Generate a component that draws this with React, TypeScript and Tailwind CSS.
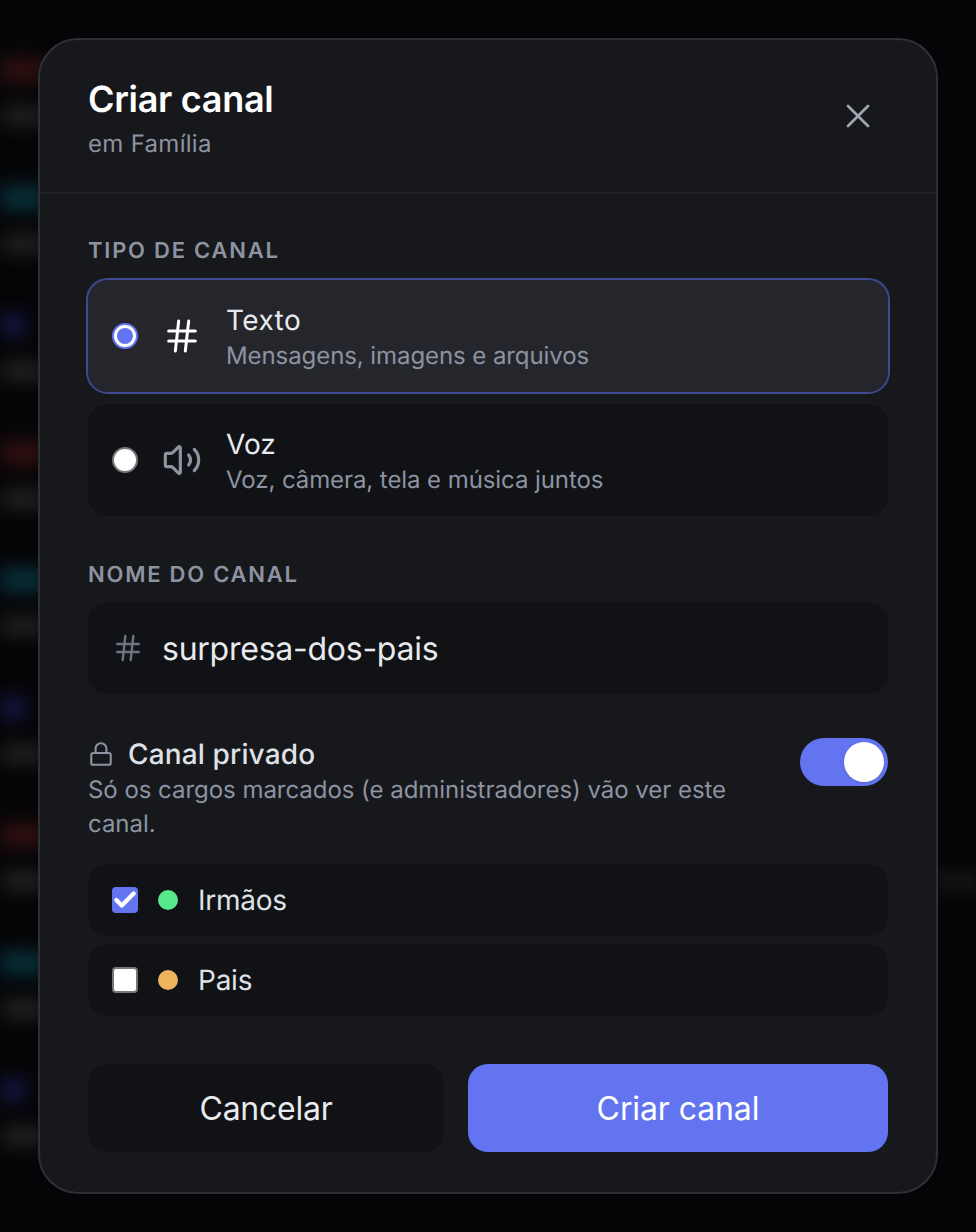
import React from 'react';
import { Check, Hash, Lock, Volume2, X } from 'lucide-react';

const INTER = "font-['Inter','Noto_Sans',sans-serif]";

// blurred chat rows behind the dialog
const BACK_ROWS = [
  { bar: 'bg-[#301010]', width: 'w-[46px]' },
  { bar: 'bg-[#08303a]', width: 'w-[46px]' },
  { bar: 'bg-[#141440]', width: 'w-[26px]' },
];

function Backdrop() {
  const rows = Array.from({ length: 9 }, (_, i) => BACK_ROWS[i % 3]);
  return (
    <div className="absolute inset-0 flex flex-col pt-[58px] blur-[9px]">
      {rows.map((row, i) => (
        <div key={i} className="h-[127.5px] flex flex-col gap-[24px] shrink-0">
          <div className={`h-[24px] ${row.width} ${row.bar}`} />
          <div className="flex justify-between h-[20px]">
            <div className="h-[20px] w-[46px] rounded-full bg-[#222224]" />
            {i === 6 && (
              <div className="flex gap-[8px]">
                <div className="h-[20px] w-[14px] rounded-full bg-[#222224]" />
                <div className="h-[20px] w-[14px] rounded-full bg-[#222224]" />
              </div>
            )}
          </div>
        </div>
      ))}
    </div>
  );
}

function SectionLabel({ children }: { children: React.ReactNode }) {
  return <div className="text-[22px] leading-[28px] font-semibold tracking-[1.76px] text-[#8d93a1]">{children}</div>;
}

function ChannelOption({ selected, icon, title, hint, titleClass }: { selected?: boolean; icon: React.ReactNode; title: string; hint: string; titleClass: string }) {
  return (
    <div
      className={`flex items-center h-[112px] rounded-[20px] pl-[24px] ${
        selected ? 'bg-[#25262c] outline-2 outline-[#3f4a8f]' : 'bg-[#101215]'
      }`}
    >
      {selected ? (
        <span className="w-[26px] h-[26px] rounded-full border-2 border-[#6274f0] bg-white flex items-center justify-center">
          <span className="w-[16px] h-[16px] rounded-full bg-[#6274f0]" />
        </span>
      ) : (
        <span className="w-[26px] h-[26px] rounded-full border-2 border-[#767676] bg-white" />
      )}
      <div className="w-[40px] ml-[24px] flex justify-center">{icon}</div>
      <div className="ml-[24px] pt-[4px] flex flex-col">
        <span className={`text-[28px] leading-[36px] text-[#e9eaee] ${titleClass}`}>{title}</span>
        <span className="text-[24px] leading-[36px] tracking-[-0.08px] text-[#8d93a1]">{hint}</span>
      </div>
    </div>
  );
}

function RoleRow({ checked, color, name }: { checked?: boolean; color: string; name: string }) {
  return (
    <div className="flex items-center h-[72px] rounded-[20px] bg-[#101215] pl-[24px]">
      {checked ? (
        <span className="w-[26px] h-[26px] rounded-[4px] bg-[#6274f0] flex items-center justify-center">
          <Check size={26} strokeWidth={4} className="text-white" />
        </span>
      ) : (
        <span className="w-[26px] h-[26px] rounded-[4px] border-2 border-[#767676] bg-white" />
      )}
      <span className={`ml-[20px] w-[20px] h-[20px] rounded-full ${color}`} />
      <span className="ml-[20px] text-[28px] leading-[36px] tracking-[-0.25px] text-[#dfe1e6]">{name}</span>
    </div>
  );
}

export default function App() {
  return (
    <div className={`relative w-[976px] h-[1232px] overflow-hidden bg-[#050507] [text-rendering:geometricPrecision] ${INTER}`}>
      <Backdrop />
      <div className="absolute inset-0 flex items-center justify-center">
        <div className="w-[900px] h-[1156px] rounded-[40px] border-2 border-[#2e3036] bg-[#16181c] flex flex-col">
          <div className="h-[154px] shrink-0 border-b-2 border-[#222429] px-[48px] flex justify-between">
            <div className="pt-[36px]">
              <h2 className="text-[36px] leading-[46px] font-semibold tracking-[-0.3px] text-white">Criar canal</h2>
              <p className="mt-[5px] text-[24px] leading-[34px] tracking-[0.3px] text-[#8d93a1]">em Família</p>
            </div>
            <button type="button" className="mt-[56px] mr-[10px] h-[40px] w-[40px] flex items-center justify-center text-[#a3a6b0]">
              <X size={40} strokeWidth={1.6} />
            </button>
          </div>

          <div className="flex flex-col px-[48px] pt-[43px]">
            <SectionLabel>TIPO DE CANAL</SectionLabel>
            <div className="mt-[15px] flex flex-col gap-[12px]">
              <ChannelOption selected titleClass="tracking-[0.4px]" icon={<Hash size={40} strokeWidth={1.8} className="text-white" />} title="Texto" hint="Mensagens, imagens e arquivos" />
              <ChannelOption titleClass="" icon={<Volume2 size={40} strokeWidth={1.9} className="text-[#8d93a1]" />} title="Voz" hint="Voz, câmera, tela e música juntos" />
            </div>

            <div className="mt-[45px]">
              <SectionLabel>NOME DO CANAL</SectionLabel>
            </div>
            <div className="mt-[13px] h-[92px] rounded-[20px] bg-[#101215] flex items-center pl-[24px]">
              <Hash size={32} strokeWidth={1.8} className="text-[#6f7480]" />
              <span className="ml-[18px] pt-[2px] text-[32px] leading-[40px] tracking-[-0.25px] text-[#e9eaee]">surpresa-dos-pais</span>
            </div>

            <div className="mt-[42px] flex justify-between">
              <div className="w-[660px]">
                <div className="flex items-center">
                  <Lock size={26} strokeWidth={1.9} className="text-[#8d93a1]" />
                  <span className="ml-[14px] text-[28px] leading-[36px] font-medium tracking-[0.15px] text-[#dfe1e6]">Canal privado</span>
                </div>
                <p className="mt-[1px] text-[24px] leading-[34px] tracking-[-0.04px] text-[#8d93a1]">Só os cargos marcados (e administradores) vão ver este canal.</p>
              </div>
              <div className="mt-[2px] w-[88px] h-[48px] rounded-full bg-[#6274f0] flex items-center justify-end pr-[4px]">
                <div className="w-[40px] h-[40px] rounded-full bg-white shadow-sm" />
              </div>
            </div>

            <div className="mt-[23px] flex flex-col gap-[8px]">
              <RoleRow checked color="bg-[#57e88a]" name="Irmãos" />
              <RoleRow color="bg-[#f0b45f]" name="Pais" />
            </div>

            <div className="mt-[48px] flex gap-[24px]">
              <button type="button" className="w-[356px] h-[88px] pt-[2px] rounded-[20px] bg-[#101215] text-[32px] tracking-[-0.25px] text-[#e9eaee]">Cancelar</button>
              <button type="button" className="w-[420px] h-[88px] pt-[2px] rounded-[20px] bg-[#6274f0] text-[32px] tracking-[-0.1px] text-white">Criar canal</button>
            </div>
          </div>
        </div>
      </div>
    </div>
  );
}
